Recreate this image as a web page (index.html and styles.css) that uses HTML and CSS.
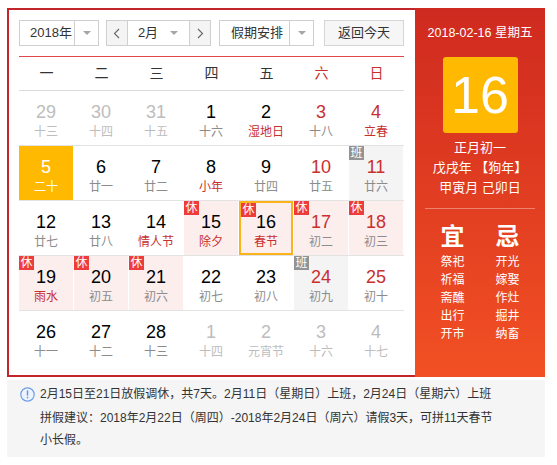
FILE: index.html
```html
<!DOCTYPE html>
<html lang="zh-CN">
<head>
<meta charset="utf-8">
<title>万年历</title>
<link rel="stylesheet" href="styles.css">
</head>
<body>
<div class="wrap">
  <div class="cal">
    <div class="main">
      <div class="toolbar">
        <div class="pick year"><span class="val">2018年</span><span class="dd"><i class="tri"></i></span></div>
        <div class="month">
          <span class="nav"><svg width="7" height="11" viewBox="0 0 7 11"><polyline points="6,1 1.5,5.5 6,10" fill="none" stroke="#666" stroke-width="1.1"/></svg></span>
          <span class="mval">2月</span><i class="tri mtri"></i>
          <span class="nav nav-r"><svg width="7" height="11" viewBox="0 0 7 11"><polyline points="1,1 5.5,5.5 1,10" fill="none" stroke="#666" stroke-width="1.1"/></svg></span>
        </div>
        <div class="pick hol"><span class="val">假期安排</span><span class="dd"><i class="tri"></i></span></div>
        <div class="today-btn">返回今天</div>
      </div>
      <div class="week">
        <span>一</span><span>二</span><span>三</span><span>四</span><span>五</span><span class="red">六</span><span class="red">日</span>
      </div>
      <div class="row">
        <div class="d other"><span class="n">29</span><span class="l">十三</span></div>
        <div class="d other"><span class="n">30</span><span class="l">十四</span></div>
        <div class="d other"><span class="n">31</span><span class="l">十五</span></div>
        <div class="d"><span class="n">1</span><span class="l">十六</span></div>
        <div class="d hl"><span class="n">2</span><span class="l">湿地日</span></div>
        <div class="d wk"><span class="n">3</span><span class="l">十八</span></div>
        <div class="d wk hl"><span class="n">4</span><span class="l">立春</span></div>
      </div>
      <div class="row">
        <div class="d today"><span class="n">5</span><span class="l">二十</span></div>
        <div class="d"><span class="n">6</span><span class="l">廿一</span></div>
        <div class="d"><span class="n">7</span><span class="l">廿二</span></div>
        <div class="d hl"><span class="n">8</span><span class="l">小年</span></div>
        <div class="d"><span class="n">9</span><span class="l">廿四</span></div>
        <div class="d wk"><span class="n">10</span><span class="l">廿五</span></div>
        <div class="d wk work"><i class="tag tag-work">班</i><span class="n">11</span><span class="l">廿六</span></div>
      </div>
      <div class="row">
        <div class="d"><span class="n">12</span><span class="l">廿七</span></div>
        <div class="d"><span class="n">13</span><span class="l">廿八</span></div>
        <div class="d hl"><span class="n">14</span><span class="l">情人节</span></div>
        <div class="d rest hl"><i class="tag">休</i><span class="n">15</span><span class="l">除夕</span></div>
        <div class="d rest hl picked"><i class="tag">休</i><span class="n">16</span><span class="l">春节</span></div>
        <div class="d rest wk"><i class="tag">休</i><span class="n">17</span><span class="l">初二</span></div>
        <div class="d rest wk"><i class="tag">休</i><span class="n">18</span><span class="l">初三</span></div>
      </div>
      <div class="row">
        <div class="d rest hl"><i class="tag">休</i><span class="n">19</span><span class="l">雨水</span></div>
        <div class="d rest"><i class="tag">休</i><span class="n">20</span><span class="l">初五</span></div>
        <div class="d rest"><i class="tag">休</i><span class="n">21</span><span class="l">初六</span></div>
        <div class="d"><span class="n">22</span><span class="l">初七</span></div>
        <div class="d"><span class="n">23</span><span class="l">初八</span></div>
        <div class="d wk work"><i class="tag tag-work">班</i><span class="n">24</span><span class="l">初九</span></div>
        <div class="d wk"><span class="n">25</span><span class="l">初十</span></div>
      </div>
      <div class="row last">
        <div class="d"><span class="n">26</span><span class="l">十一</span></div>
        <div class="d"><span class="n">27</span><span class="l">十二</span></div>
        <div class="d"><span class="n">28</span><span class="l">十三</span></div>
        <div class="d other"><span class="n">1</span><span class="l">十四</span></div>
        <div class="d other"><span class="n">2</span><span class="l">元宵节</span></div>
        <div class="d other"><span class="n">3</span><span class="l">十六</span></div>
        <div class="d other"><span class="n">4</span><span class="l">十七</span></div>
      </div>
    </div>
    <div class="side">
      <div class="s-date">2018-02-16 星期五</div>
      <div class="s-day">16</div>
      <div class="s-lunar">
        <div>正月初一</div>
        <div>戊戌年 【狗年】</div>
        <div>甲寅月 己卯日</div>
      </div>
      <div class="s-sep"></div>
      <div class="s-yj">
        <div class="s-col">
          <div class="s-big">宜</div>
          <div>祭祀</div><div>祈福</div><div>斋醮</div><div>出行</div><div>开市</div>
        </div>
        <div class="s-col">
          <div class="s-big">忌</div>
          <div>开光</div><div>嫁娶</div><div>作灶</div><div>掘井</div><div>纳畜</div>
        </div>
      </div>
    </div>
  </div>
  <div class="info">
    <svg class="info-ico" width="15" height="15" viewBox="0 0 15 15"><circle cx="7.5" cy="7.5" r="6.7" fill="#eef4fd" stroke="#6e9ee6" stroke-width="1.2"/><rect x="6.8" y="3.4" width="1.4" height="5.2" fill="#5f92e2"/><rect x="6.8" y="9.8" width="1.4" height="1.5" fill="#5f92e2"/></svg>
    <div class="info-text">
      <p class="p1">2月15日至21日放假调休，共7天。2月11日（星期日）上班，2月24日（星期六）上班</p>
      <p>拼假建议：2018年2月22日（周四）-2018年2月24日（周六）请假3天，可拼11天春节小长假。</p>
    </div>
  </div>
</div>
</body>
</html>
```

FILE: styles.css
```css
* { box-sizing: border-box; margin: 0; padding: 0; }
body {
  margin: 0;
  background: #fff;
  color: #333;
  font-family: "Liberation Sans", Arial, "Noto Sans CJK SC", sans-serif;
}
.wrap { width: 538px; margin: 8px 0 0 7px; }
.cal { display: flex; height: 369px; }
.main {
  width: 408px;
  border: 2px solid #c2262b;
  border-right: 0;
  padding: 10px 11px 0 10px;
}
.toolbar { display: flex; height: 26px; font-size: 13px; color: #333; }
.pick {
  display: flex;
  height: 26px;
  border: 1px solid #cfcfcf;
  background: #fff;
}
.pick .val { line-height: 24px; padding-left: 10px; }
.pick .dd {
  width: 24px;
  border-left: 1px solid #cfcfcf;
  display: flex;
  align-items: center;
  justify-content: center;
}
.tri {
  display: block;
  width: 0;
  height: 0;
  border-left: 4px solid transparent;
  border-right: 4px solid transparent;
  border-top: 4px solid #a6a6a6;
}
.year { width: 80px; }
.year .val { width: 55px; }
.month {
  display: flex;
  align-items: center;
  width: 105px;
  height: 26px;
  margin-left: 7px;
  border: 1px solid #cfcfcf;
}
.nav {
  width: 22px;
  height: 24px;
  background: #f4f4f4;
  display: flex;
  align-items: center;
  justify-content: center;
  border-right: 1px solid #cfcfcf;
}
.nav-r { border-right: 0; border-left: 1px solid #cfcfcf; }
.mval { line-height: 24px; padding-left: 10px; width: 44px; }
.mtri { margin-right: 11px; }
.hol { width: 95px; margin-left: 8px; }
.hol .val { width: 70px; padding-left: 11px; }
.today-btn {
  width: 82px;
  height: 26px;
  margin-left: 10px;
  border: 1px solid #d6d6d6;
  background: #f6f6f6;
  line-height: 24px;
  text-align: center;
}
.week {
  display: flex;
  margin-top: 10px;
  border-top: 1px solid #e0474a;
  border-bottom: 1px solid #dcdcdc;
  height: 35px;
}
.week span {
  width: 55px;
  text-align: center;
  line-height: 33px;
  font-size: 14px;
  color: #333;
}
.week .red { color: #c8302e; }
.row {
  display: flex;
  height: 55px;
  border-bottom: 1px solid #e3e3e3;
}
.row.last { border-bottom: 0; }
.d {
  position: relative;
  width: 54px;
  margin-right: 1px;
  height: 54px;
  text-align: center;
  padding-top: 9px;
}
.d .n {
  display: block;
  font-size: 18px;
  line-height: 24px;
  color: #000;
}
.d .l {
  display: block;
  font-size: 12px;
  line-height: 16px;
  color: #8c8c8c;
}
.d.wk .n { color: #c8302e; }
.d.hl .l { color: #c8302e; }
.d.other .n, .d.other .l { color: #bdbdbd; }
.d.rest { background: #fdeeee; }
.d.work { background: #f4f4f4; }
.d.today { background: #ffb900; }
.d.today .n, .d.today .l { color: #fff; }
.d.picked { box-shadow: inset 0 0 0 2px #fbb31a; }
.tag {
  position: absolute;
  left: 0;
  top: 0;
  width: 15px;
  height: 14px;
  line-height: 14px;
  font-size: 12px;
  font-style: normal;
  text-align: center;
  color: #fff;
  background: #ee3b3b;
}
.d.picked .tag { left: 2px; top: 2px; }
.tag-work { background: #939393; }

.side {
  width: 130px;
  height: 369px;
  background: linear-gradient(#cf2a1f, #f25024);
  color: #fff;
  text-align: center;
}
.s-date { font-size: 12.5px; line-height: 20px; padding-top: 15px; }
.s-day {
  width: 75px;
  height: 76px;
  margin: 14px auto 0;
  background: #ffb900;
  border-radius: 3px;
  font-size: 52px;
  line-height: 76px;
}
.s-lunar { margin-top: 5px; font-size: 13px; line-height: 20px; }
.s-sep {
  width: 110px;
  height: 1px;
  margin: 10px auto 0;
  background: rgba(255, 255, 255, 0.35);
}
.s-yj {
  display: flex;
  justify-content: center;
  gap: 31px;
  margin-top: 12px;
  font-size: 12px;
  line-height: 18px;
}
.s-col { width: 24px; }
.s-big { font-size: 24px; line-height: 32px; font-weight: bold; }

.info {
  display: flex;
  margin-top: 3px;
  background: #f5f5f5;
  padding: 3px 0 6px 13px;
  font-size: 12px;
  line-height: 22px;
  color: #333;
}
.info-ico { flex: none; margin-top: 4px; margin-right: 5px; }
.info-text { width: 458px; }
.info-text .p1 { margin-bottom: 2px; }
```
